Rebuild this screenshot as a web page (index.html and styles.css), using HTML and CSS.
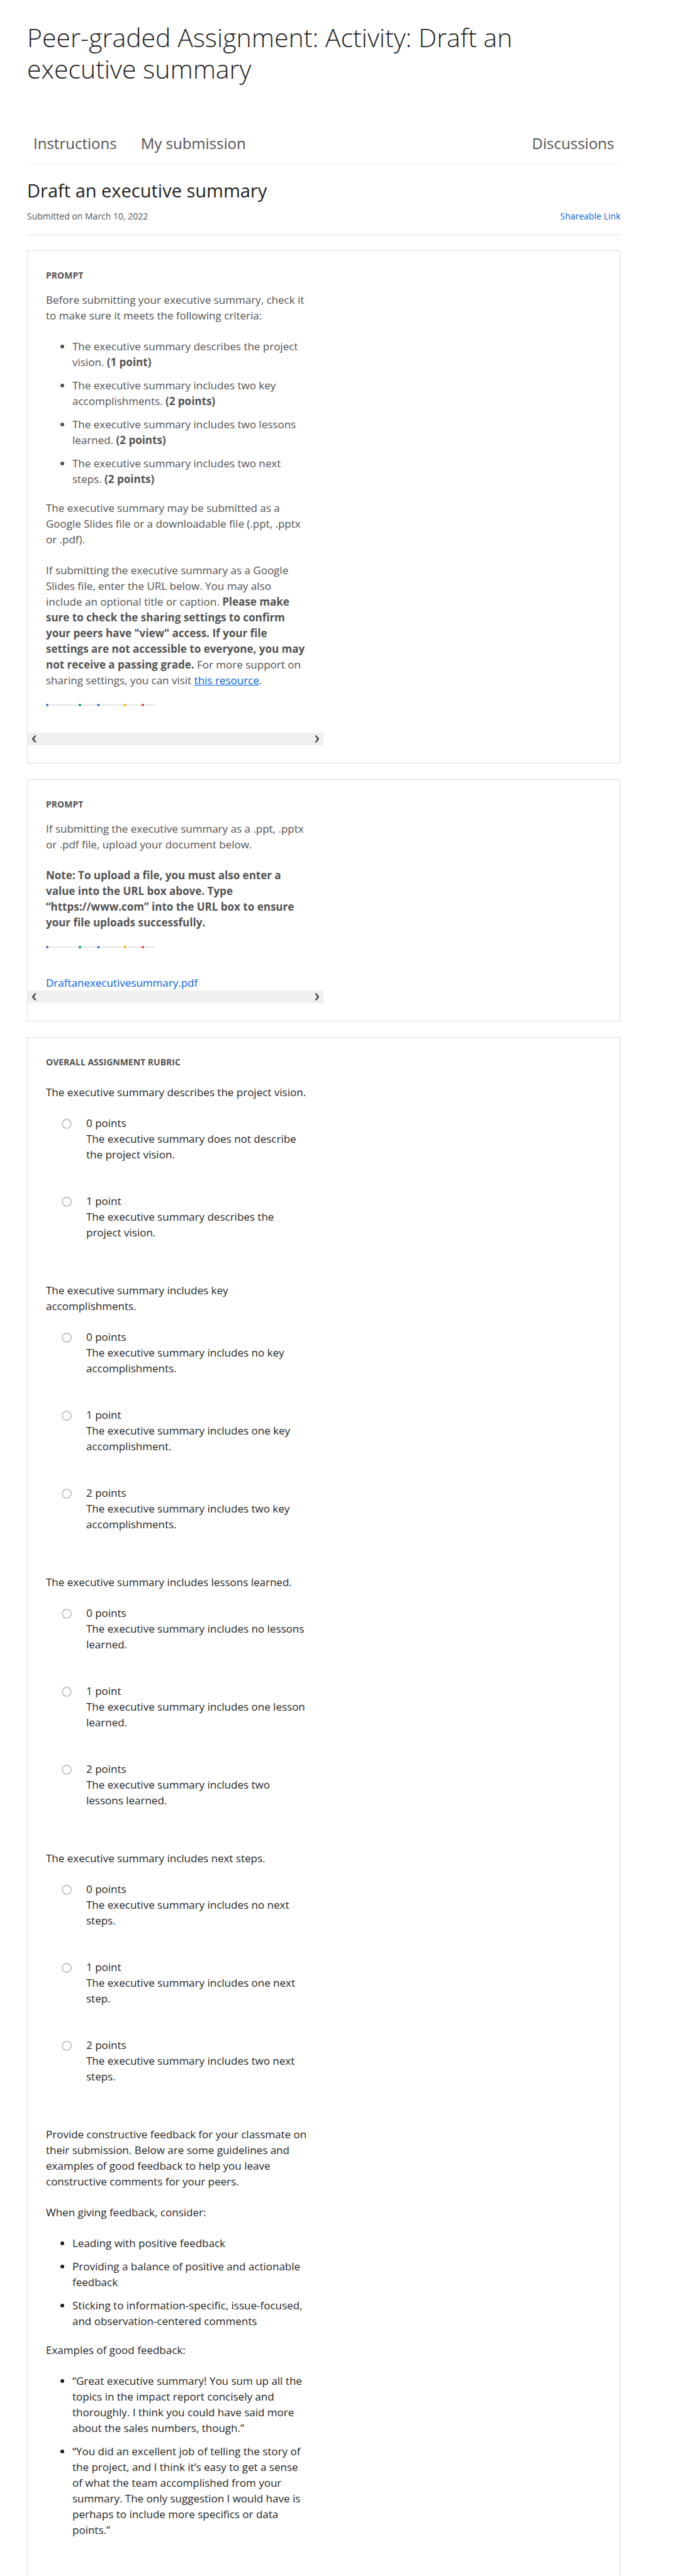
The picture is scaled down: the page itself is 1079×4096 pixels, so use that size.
FILE: index.html
```html
<!DOCTYPE html>
<html lang="en">
<head>
<meta charset="utf-8">
<meta name="viewport" content="width=device-width, initial-scale=1">
<title>Peer-graded Assignment: Activity: Draft an executive summary</title>
<link rel="stylesheet" href="styles.css">
</head>
<body>
<main class="page">
  <h1 class="page-title">Peer-graded Assignment: Activity: Draft an executive summary</h1>

  <nav class="tabs">
    <a class="tab" href="#instructions">Instructions</a>
    <a class="tab" href="#submission">My submission</a>
    <a class="tab tab-end" href="#discussions">Discussions</a>
  </nav>

  <header class="submission-header">
    <h2 class="submission-title">Draft an executive summary</h2>
    <div class="submission-meta">
      <span>Submitted on March 10, 2022</span>
      <a class="link" href="#share">Shareable Link</a>
    </div>
  </header>

  <section class="card prompt">
    <h3 class="label">Prompt</h3>
    <div class="column">
      <p>Before submitting your executive summary, check it to make sure it meets the following criteria:</p>
      <ul class="bullets">
        <li>The executive summary describes the project vision. <strong>(1 point)</strong></li>
        <li>The executive summary includes two key accomplishments. <strong>(2 points)</strong></li>
        <li>The executive summary includes two lessons learned. <strong>(2 points)</strong></li>
        <li>The executive summary includes two next steps. <strong>(2 points)</strong></li>
      </ul>
      <p>The executive summary may be submitted as a Google Slides file or a downloadable file (.ppt, .pptx or .pdf).</p>
      <p>If submitting the executive summary as a Google Slides file, enter the URL below. You may also include an optional title or caption. <strong>Please make sure to check the sharing settings to confirm your peers have "view" access. If your file settings are not accessible to everyone, you may not receive a passing grade.</strong> For more support on sharing settings, you can visit <a class="link underlined" href="#resource">this resource</a>.</p>
      <svg class="divider" width="174" height="4" viewBox="0 0 174 4" aria-hidden="true">
        <path d="M2 2H173" stroke="#e6e6e6" stroke-width="2"/>
        <circle cx="2" cy="2" r="2" fill="#4471c4"/><circle cx="54" cy="2" r="2" fill="#0f9d58"/><circle cx="83.500" cy="2" r="2" fill="#4471c4"/><circle cx="125.500" cy="2" r="2" fill="#f4b400"/><circle cx="154" cy="2" r="2" fill="#db4437"/>
      </svg>
    </div>
    <div class="scrollbar">
      <button class="scroll-button" type="button" aria-label="Scroll left"><svg width="8" height="12" viewBox="0 0 8 12"><path d="M5 0.500h3L4 6l4 5.500H5L0.500 6z" fill="#505050"/></svg></button>
      <button class="scroll-button" type="button" aria-label="Scroll right"><svg width="8" height="12" viewBox="0 0 8 12"><path d="M3 0.500H0L4 6l-4 5.500h3L7.500 6z" fill="#505050"/></svg></button>
    </div>
  </section>

  <section class="card prompt">
    <h3 class="label">Prompt</h3>
    <div class="column">
      <p>If submitting the executive summary as a .ppt, .pptx or .pdf file, upload your document below.</p>
      <p><strong>Note: To upload a file, you must also enter a value into the URL box above. Type “https://www.com” into the URL box to ensure your file uploads successfully.</strong></p>
      <svg class="divider" width="174" height="4" viewBox="0 0 174 4" aria-hidden="true">
        <path d="M2 2H173" stroke="#e6e6e6" stroke-width="2"/>
        <circle cx="2" cy="2" r="2" fill="#4471c4"/><circle cx="54" cy="2" r="2" fill="#0f9d58"/><circle cx="83.500" cy="2" r="2" fill="#4471c4"/><circle cx="125.500" cy="2" r="2" fill="#f4b400"/><circle cx="154" cy="2" r="2" fill="#db4437"/>
      </svg>
    </div>
    <a class="link file" href="#file">Draftanexecutivesummary.pdf</a>
    <div class="scrollbar">
      <button class="scroll-button" type="button" aria-label="Scroll left"><svg width="8" height="12" viewBox="0 0 8 12"><path d="M5 0.500h3L4 6l4 5.500H5L0.500 6z" fill="#505050"/></svg></button>
      <button class="scroll-button" type="button" aria-label="Scroll right"><svg width="8" height="12" viewBox="0 0 8 12"><path d="M3 0.500H0L4 6l-4 5.500h3L7.500 6z" fill="#505050"/></svg></button>
    </div>
  </section>

  <section class="card rubric">
    <h3 class="label">Overall assignment rubric</h3>
    <div class="column">
      <fieldset class="question">
        <legend>The executive summary describes the project vision.</legend>
        <label class="option"><input type="radio" name="vision"><span>0 points<br>The executive summary does not describe the project vision.</span></label>
        <label class="option"><input type="radio" name="vision"><span>1 point<br>The executive summary describes the project vision.</span></label>
      </fieldset>
      <fieldset class="question">
        <legend>The executive summary includes key accomplishments.</legend>
        <label class="option"><input type="radio" name="key"><span>0 points<br>The executive summary includes no key accomplishments.</span></label>
        <label class="option"><input type="radio" name="key"><span>1 point<br>The executive summary includes one key accomplishment.</span></label>
        <label class="option"><input type="radio" name="key"><span>2 points<br>The executive summary includes two key accomplishments.</span></label>
      </fieldset>
      <fieldset class="question">
        <legend>The executive summary includes lessons learned.</legend>
        <label class="option"><input type="radio" name="lessons"><span>0 points<br>The executive summary includes no lessons learned.</span></label>
        <label class="option"><input type="radio" name="lessons"><span>1 point<br>The executive summary includes one lesson learned.</span></label>
        <label class="option"><input type="radio" name="lessons"><span>2 points<br>The executive summary includes two lessons learned.</span></label>
      </fieldset>
      <fieldset class="question">
        <legend>The executive summary includes next steps.</legend>
        <label class="option"><input type="radio" name="steps"><span>0 points<br>The executive summary includes no next steps.</span></label>
        <label class="option"><input type="radio" name="steps"><span>1 point<br>The executive summary includes one next step.</span></label>
        <label class="option"><input type="radio" name="steps"><span>2 points<br>The executive summary includes two next steps.</span></label>
      </fieldset>
      <p>Provide constructive feedback for your classmate on their submission. Below are some guidelines and examples of good feedback to help you leave constructive comments for your peers.</p>
      <p>When giving feedback, consider:</p>
      <ul class="bullets">
        <li>Leading with positive feedback</li>
        <li>Providing a balance of positive and actionable feedback</li>
        <li>Sticking to information-specific, issue-focused, and observation-centered comments</li>
      </ul>
      <p>Examples of good feedback:</p>
      <ul class="bullets">
        <li>“Great executive summary! You sum up all the topics in the impact report concisely and thoroughly. I think you could have said more about the sales numbers, though.”</li>
        <li>“You did an excellent job of telling the story of the project, and I think it’s easy to get a sense of what the team accomplished from your summary. The only suggestion I would have is perhaps to include more specifics or data points.”</li>
      </ul>
    </div>
  </section>
</main>
</body>
</html>
```

FILE: styles.css
```css
* {
  box-sizing: border-box;
}

body {
  margin: 0;
  background: #fff;
  color: #1f1f1f;
  font-family: "Open Sans", "Noto Sans", sans-serif;
  font-size: 17px;
  line-height: 25px;
}

h1, h2, h3, p, ul {
  margin: 0;
}

.page {
  display: flex;
  flex-direction: column;
  min-height: 100vh;
  padding: 34px 93px 0 43px;
}

.page-title {
  max-width: 840px;
  font-size: 41px;
  line-height: 50px;
  font-weight: 300;
}

.tabs {
  display: flex;
  gap: 38px;
  margin-top: 78px;
  padding: 0 10px 16px;
  border-bottom: 1px solid #eee;
}

.tab {
  color: #525252;
  font-size: 24px;
  line-height: 32px;
  text-decoration: none;
}

.tab-end {
  margin-left: auto;
}

.submission-header {
  padding: 23px 0 19px;
  border-bottom: 1px solid #ddd;
}

.submission-title {
  font-size: 29px;
  line-height: 38px;
  font-weight: 400;
}

.submission-meta {
  display: flex;
  justify-content: space-between;
  margin-top: 12px;
  color: #525252;
  font-size: 14px;
  line-height: 20px;
}

.link {
  color: #0062e4;
  text-decoration: none;
}

.underlined {
  text-decoration: underline;
}

.card {
  margin-top: 25px;
  padding-top: 29px;
  border: 1px solid #ddd;
}

.submission-header + .card {
  margin-top: 24px;
}

.label {
  padding-left: 29px;
  color: #525252;
  font-size: 14px;
  line-height: 20px;
  font-weight: 700;
  text-transform: uppercase;
}

.column {
  max-width: 446px;
  padding-left: 29px;
}

.column p + p,
.column p + .bullets {
  margin-top: 24px;
}

.bullets {
  padding-left: 42px;
}

.bullets li + li {
  margin-top: 12px;
}

.bullets + p {
  margin-top: 21px;
}

.prompt {
  padding-bottom: 28px;
  color: #525252;
}

.prompt .column {
  margin-top: 16px;
  padding-bottom: 42px;
}

.divider {
  display: block;
  margin-top: 25px;
}

.file {
  display: block;
  margin-left: 29px;
}

.scrollbar {
  display: flex;
  justify-content: space-between;
  max-width: 470px;
  height: 20px;
  background: #f0f0f0;
}

.scroll-button {
  display: flex;
  align-items: center;
  justify-content: center;
  width: 20px;
  padding: 0;
  border: 0;
  background: none;
}

.rubric {
  flex: 1;
  padding-bottom: 58px;
  border-bottom: 0;
}

.rubric .column {
  margin-top: 25px;
}

.question {
  min-width: 0;
  margin: 0 0 67px;
  padding: 0;
  border: 0;
}

.question legend {
  margin-bottom: 24px;
  padding: 0;
}

.option {
  display: flex;
  gap: 23px;
  padding-left: 25px;
}

.option + .option {
  margin-top: 49px;
}

.option input {
  flex: none;
  appearance: none;
  width: 16px;
  height: 16px;
  margin: 6px 0 0;
  border: 2px solid #c7c7cf;
  border-radius: 50%;
  background: #fff;
}
```
